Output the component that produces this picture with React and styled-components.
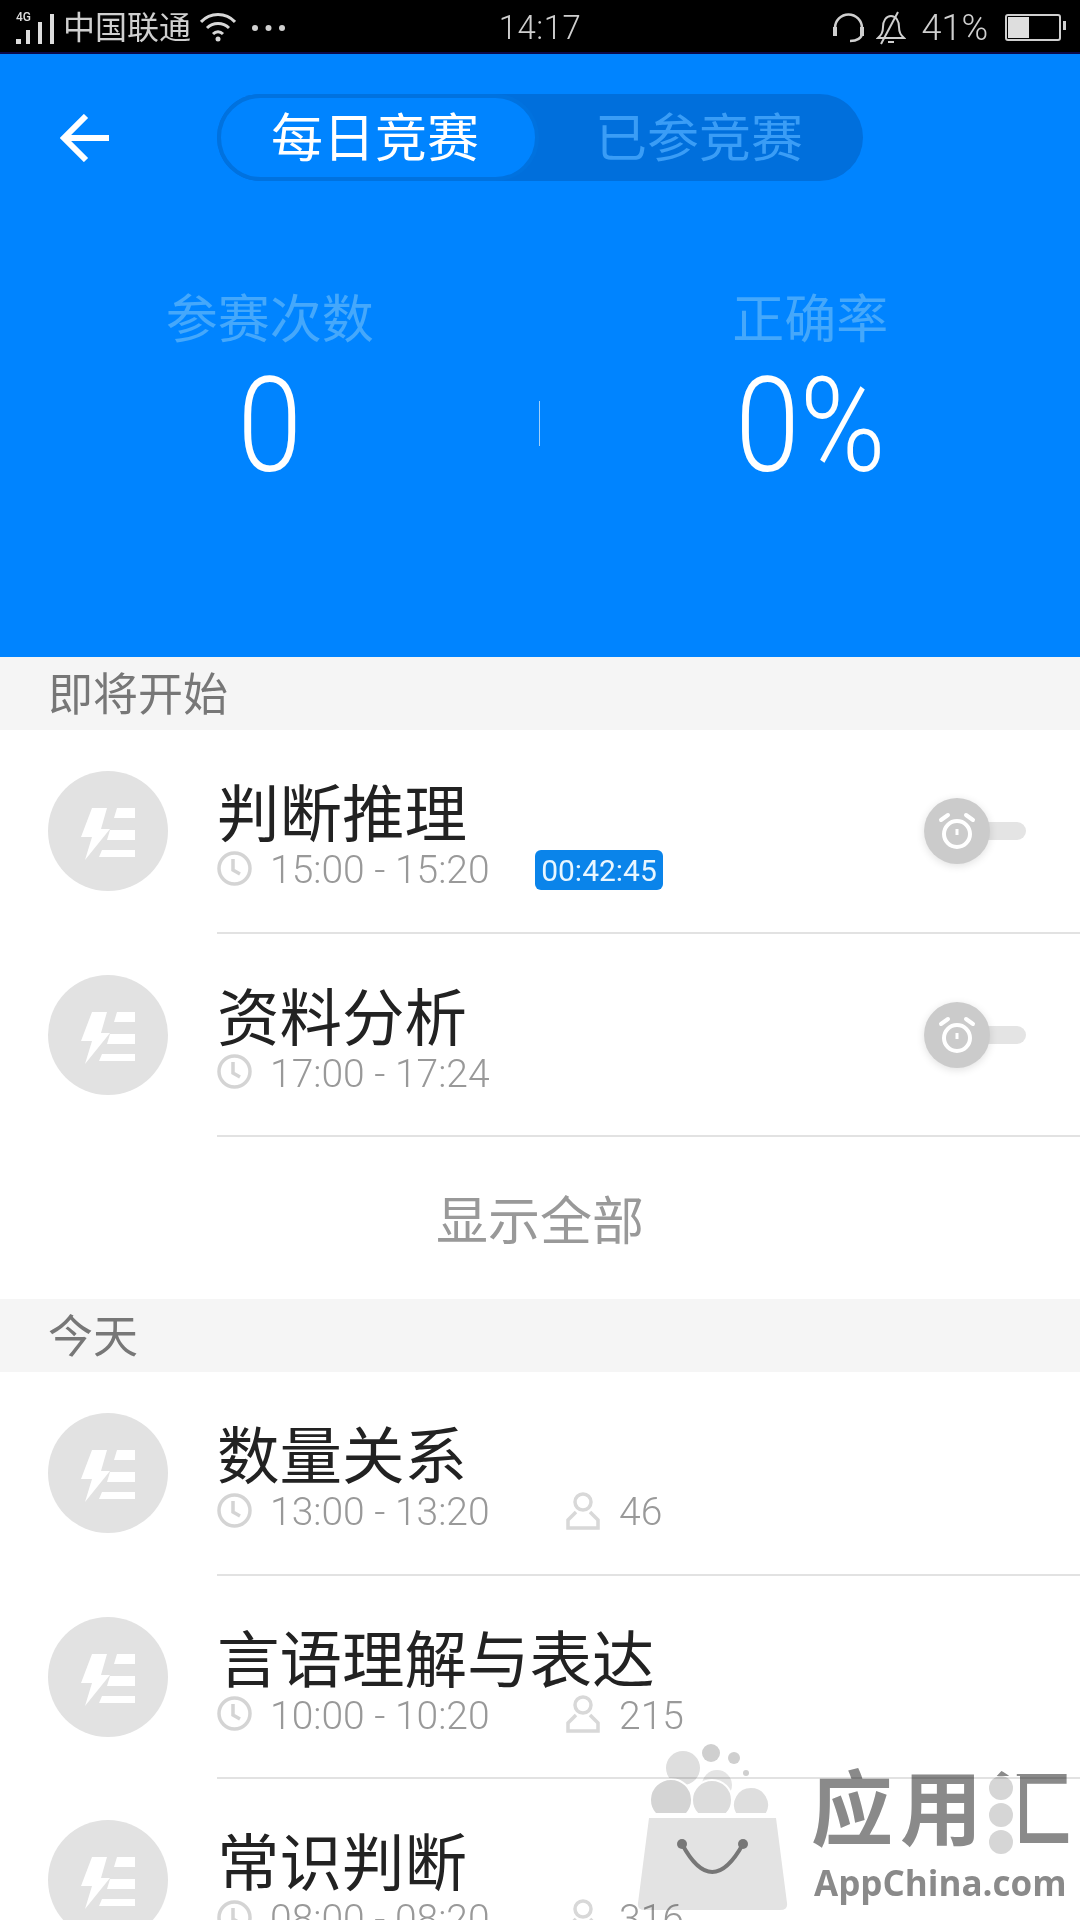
import React from "react";
import styled, { createGlobalStyle } from "styled-components";

const GlobalStyle = createGlobalStyle`
    html, body {
        margin: 0;
        padding: 0;
        background: #fff;
        font-family: Roboto, "Noto Sans CJK SC", sans-serif;
    }
`;

const Page = styled.div`
    position: relative;
    width: 1080px;
    height: 1920px;
    overflow: hidden;
    background: #fff;
`;

const StatusBar = styled.div`
    display: flex;
    align-items: center;
    height: 49px;
    padding: 3px 15px 0;
    background: #000;
    border-bottom: 2px solid #0b0a4a;
    color: #cfcfcf;
    font-size: 36px;
    font-weight: 300;
`;

const StatusSide = styled.div`
    flex: 1;
    display: flex;
    align-items: center;
    justify-content: ${(p) => (p.$end ? "flex-end" : "flex-start")};
`;

const SignalWrap = styled.div`
    position: relative;
    width: 40px;
    height: 32px;
    margin-right: 8px;
`;

const SignalTag = styled.span`
    position: absolute;
    top: -2px;
    left: 1px;
    font-size: 12px;
    line-height: 14px;
    font-weight: 500;
    color: #ddd;
`;

const Carrier = styled.span`
    width: 129px;
    font-size: 32px;
    line-height: 40px;
    font-weight: 400;
    margin-right: 8px;
`;

const Clock = styled.span`
    font-size: 33px;
    letter-spacing: 0.5px;
`;

const Battery = styled.div`
    position: relative;
    display: flex;
    width: 50px;
    height: 21px;
    padding: 1px;
    margin: 0 4px 0 17px;
    border: 2px solid #cfcfcf;
    border-radius: 3px;

    &::before {
        content: "";
        width: 41%;
        background: #dedede;
    }

    &::after {
        content: "";
        position: absolute;
        top: 5px;
        right: -7px;
        width: 3px;
        height: 9px;
        background: #cfcfcf;
    }
`;

const Hero = styled.section`
    display: flex;
    flex-direction: column;
    height: 603px;
    background: #0084ff;
`;

const TopRow = styled.div`
    display: flex;
    align-items: center;
    padding: 40px 0 0 60px;
`;

const BackIcon = styled.svg`
    width: 50px;
    height: 48px;
    margin-right: 107px;
`;

const Tabs = styled.div`
    display: flex;
    width: 646px;
    height: 87px;
    border-radius: 44px;
    background: #006fdc;
`;

const Tab = styled.div`
    width: ${(p) => (p.$active ? "322px" : "auto")};
    box-sizing: border-box;
    padding: ${(p) => (p.$active ? "0 6px 0 0" : "0 0 0 56px")};
    text-align: ${(p) => (p.$active ? "center" : "left")};
    border: ${(p) => (p.$active ? "4px solid #0072df" : "none")};
    border-radius: 44px;
    background: ${(p) => (p.$active ? "#0084ff" : "transparent")};
    color: ${(p) => (p.$active ? "#fff" : "#3a9df6")};
    font-size: 52px;
    font-weight: 400;
    line-height: ${(p) => (p.$active ? "84px" : "92px")};
`;

const Stats = styled.div`
    display: flex;
    align-items: center;
    margin-top: 110px;
`;

const Stat = styled.div`
    flex: 1;
    display: flex;
    flex-direction: column;
    align-items: center;
`;

const StatLabel = styled.div`
    color: #45a8fb;
    font-size: 52px;
    font-weight: 400;
    line-height: 60px;
`;

const StatValue = styled.div`
    margin-top: 10px;
    color: #fff;
    font-size: 132px;
    font-weight: 300;
    line-height: 130px;
    transform: scaleX(0.88);
`;

const StatDivider = styled.div`
    width: 1px;
    height: 45px;
    margin: 64px 1px 0 -1px;
    background: #9fd0fb;
`;

const SectionTitle = styled.div`
    height: 73px;
    padding-left: 48px;
    background: #f5f5f5;
    color: #777;
    font-size: 45px;
    font-weight: 400;
    line-height: 78px;
`;

const Row = styled.div`
    display: flex;
    height: 203.5px;
    padding-left: 48px;
`;

const Avatar = styled.svg`
    flex: none;
    width: 120px;
    height: 120px;
    margin: 41px 49px 0 0;
`;

const RowBody = styled.div`
    flex: 1;
    display: flex;
    align-items: flex-start;
    justify-content: space-between;
    box-sizing: border-box;
    padding: 53px 54px 0 0;
    border-bottom: 2px solid #e2e2e2;
`;

const RowTitle = styled.div`
    color: #222;
    font-size: 62.5px;
    font-weight: 400;
    line-height: 66px;
    white-space: nowrap;
`;

const Meta = styled.div`
    display: flex;
    align-items: center;
    height: 40px;
    margin-top: 1px;
    color: #999;
    font-size: 39px;
    font-weight: 300;
`;

const ClockIcon = styled.svg`
    width: 35px;
    height: 35px;
    margin-top: -4px;
`;

const TimeText = styled.span`
    width: 218px;
    margin-left: 18px;
    white-space: nowrap;
`;

const Countdown = styled.span`
    width: 128px;
    height: 40px;
    margin-left: 47px;
    border-radius: 6px;
    background: #0a84ea;
    color: #e8f6ff;
    font-size: 30px;
    font-weight: 400;
    line-height: 41px;
    text-align: center;
`;

const PersonIcon = styled.svg`
    width: 36px;
    height: 38px;
    margin: -3px 18px 0 77px;
`;

const Toggle = styled.div`
    position: relative;
    width: 102px;
    height: 66px;
    margin-top: 15px;

    &::before {
        content: "";
        position: absolute;
        top: 24px;
        left: 40px;
        width: 62px;
        height: 18px;
        border-radius: 9px;
        background: #e4e4e4;
    }
`;

const Knob = styled.svg`
    position: absolute;
    top: 0;
    left: 0;
    width: 66px;
    height: 66px;
    border-radius: 50%;
    background: #cbcbcb;
    box-shadow: 0 2px 8px rgba(0, 0, 0, 0.12);
`;

const ShowAll = styled.div`
    height: 162px;
    color: #999;
    font-size: 52px;
    font-weight: 400;
    line-height: 172px;
    text-align: center;
`;

const Watermark = styled.div`
    position: absolute;
    left: 630px;
    top: 1740px;
    display: flex;
    width: 450px;
    mix-blend-mode: multiply;
`;

const BagIcon = styled.svg`
    flex: none;
    width: 160px;
    height: 172px;
    margin-right: 21px;
`;

const Wordmark = styled.div`
    position: relative;
    padding-top: 23px;
`;

const WordmarkCn = styled.div`
    color: #8a8a8a;
    font-size: 82px;
    font-weight: 700;
    line-height: 96px;
    letter-spacing: 7px;
    white-space: nowrap;
`;

const WordmarkHui = styled.span`
    position: relative;
    display: inline-block;
`;

const HuiDots = styled.span`
    position: absolute;
    top: 13px;
    left: -7px;
    display: flex;
    flex-direction: column;
    gap: 3px;
    width: 38px;
    height: 92px;
    background: #fff;
`;

const HuiDot = styled.i`
    width: 24px;
    height: 24px;
    margin-left: 7px;
    border-radius: 50%;
    background: #d6d6d6;
`;

const WordmarkEn = styled.div`
    margin: 3px 0 0 3px;
    color: #8a8a8a;
    font-family: "Open Sans", sans-serif;
    font-size: 35px;
    font-weight: 700;
    line-height: 42px;
    white-space: nowrap;
`;

const ClockGlyph = () => (
    <ClockIcon viewBox="0 0 35 35" fill="none" stroke="#d4d4d4" strokeWidth="3.5">
        <circle cx="17.5" cy="17.5" r="15.5" />
        <path d="M16 8v11l7 4" />
    </ClockIcon>
);

const BrandGlyph = () => (
    <Avatar viewBox="0 0 120 120">
        <circle cx="60" cy="60" r="60" fill="#e2e2e2" />
        <path fill="#fff" d="M44 37h15l-6 21h9L37 89l7-23H33z" />
        <path fill="#fff" d="M69 37h18v10H66zM62 59h25v10H59zM54 79h33v7H51z" />
    </Avatar>
);

const AlarmToggle = () => (
    <Toggle>
        <Knob viewBox="0 0 66 66" fill="none" stroke="#fff">
            <circle cx="33" cy="36" r="13" strokeWidth="4" />
            <path d="M33 31v6" strokeWidth="3" />
            <path d="M17 22l7-5M49 22l-7-5" strokeWidth="4" strokeLinecap="round" />
        </Knob>
    </Toggle>
);

const upcoming = [
    { title: "判断推理", time: "15:00 - 15:20", countdown: "00:42:45", alarm: true },
    { title: "资料分析", time: "17:00 - 17:24", alarm: true },
];

const today = [
    { title: "数量关系", time: "13:00 - 13:20", count: 46 },
    { title: "言语理解与表达", time: "10:00 - 10:20", count: 215 },
    { title: "常识判断", time: "08:00 - 08:20", count: 316 },
];

const Contest = ({ title, time, countdown, count, alarm }) => (
    <Row>
        <BrandGlyph />
        <RowBody>
            <div>
                <RowTitle>{title}</RowTitle>
                <Meta>
                    <ClockGlyph />
                    <TimeText>{time}</TimeText>
                    {countdown && <Countdown>{countdown}</Countdown>}
                    {count !== undefined && (
                        <>
                            <PersonIcon viewBox="0 0 36 38" fill="none" stroke="#d8d8d8" strokeWidth="3.5">
                                <circle cx="18" cy="10" r="8" />
                                <path d="M11 20L3 28v8h30v-8l-8-8" />
                            </PersonIcon>
                            <span>{count}</span>
                        </>
                    )}
                </Meta>
            </div>
            {alarm && <AlarmToggle />}
        </RowBody>
    </Row>
);

export default function App() {
    return (
        <Page>
            <GlobalStyle />
            <StatusBar>
                <StatusSide>
                    <SignalWrap>
                        <SignalTag>4G</SignalTag>
                        <svg width="40" height="32" viewBox="0 0 40 32" fill="#ddd">
                            <rect x="1" y="26" width="5" height="5" />
                            <rect x="11" y="17" width="4" height="14" />
                            <rect x="23" y="9" width="4" height="22" />
                            <rect x="35" y="1" width="4" height="30" />
                        </svg>
                    </SignalWrap>
                    <Carrier>中国联通</Carrier>
                    <svg width="36" height="32" viewBox="0 0 36 32" fill="none" stroke="#d8d8d8" strokeWidth="3">
                        <path d="M1 10C10 0 26 0 35 10M7 16c6-6 16-6 22 0M13 22c3-3 7-3 10 0" />
                        <circle cx="18" cy="27" r="2.5" fill="#d8d8d8" stroke="none" />
                    </svg>
                    <svg width="33" height="32" viewBox="0 0 33 32" fill="#d0d0d0" style={{ marginLeft: 16 }}>
                        <circle cx="3" cy="16" r="3" />
                        <circle cx="16.5" cy="16" r="3" />
                        <circle cx="30" cy="16" r="3" />
                    </svg>
                </StatusSide>
                <Clock>14:17</Clock>
                <StatusSide $end>
                    <svg width="33" height="30" viewBox="0 0 33 30" fill="none" stroke="#cfcfcf" strokeWidth="2.5">
                        <path d="M3 20v-5a13.5 13.5 0 0 1 27 0v5c0 5-5 8-12 8" />
                        <path d="M3 14v9M30 14v9" strokeWidth="4" />
                    </svg>
                    <svg width="30" height="34" viewBox="0 0 30 34" fill="none" stroke="#cfcfcf" strokeWidth="2" style={{ margin: "0 15px 0 11px" }}>
                        <path d="M2 27c3-3 5-5 5-11s3-11 8-11 8 5 8 11 2 8 5 11z" />
                        <path d="M5 33L22 1" />
                        <path d="M12 31h6" />
                    </svg>
                    <span>41%</span>
                    <Battery />
                </StatusSide>
            </StatusBar>

            <Hero>
                <TopRow>
                    <BackIcon viewBox="0 0 50 48" fill="none" stroke="#fff" strokeWidth="6">
                        <path d="M49 24H4" />
                        <path d="M26 2L4 24l22 22" />
                    </BackIcon>
                    <Tabs>
                        <Tab $active>每日竞赛</Tab>
                        <Tab>已参竞赛</Tab>
                    </Tabs>
                </TopRow>
                <Stats>
                    <Stat>
                        <StatLabel>参赛次数</StatLabel>
                        <StatValue>0</StatValue>
                    </Stat>
                    <StatDivider />
                    <Stat>
                        <StatLabel>正确率</StatLabel>
                        <StatValue>0%</StatValue>
                    </Stat>
                </Stats>
            </Hero>

            <SectionTitle>即将开始</SectionTitle>
            {upcoming.map((item) => (
                <Contest key={item.title} {...item} />
            ))}
            <ShowAll>显示全部</ShowAll>

            <SectionTitle>今天</SectionTitle>
            {today.map((item) => (
                <Contest key={item.title} {...item} />
            ))}

            <Watermark>
                <BagIcon viewBox="0 0 160 172">
                    <circle cx="53" cy="28" r="17" fill="#dedede" />
                    <circle cx="81" cy="13" r="9" fill="#cfcfcf" />
                    <circle cx="104" cy="18" r="6" fill="#cfcfcf" />
                    <circle cx="116" cy="33" r="3" fill="#cfcfcf" />
                    <circle cx="87" cy="45" r="15" fill="#e4e4e4" />
                    <path fill="#d4d4d4" stroke="#fff" strokeWidth="2" d="M25.4 74A21 21 0 1 1 56.6 74Z" />
                    <path fill="#dcdcdc" stroke="#fff" strokeWidth="2" d="M67.7 74A20 20 0 1 1 96.3 74Z" />
                    <path fill="#dedede" stroke="#fff" strokeWidth="2" d="M105.4 74A18 18 0 1 1 136.6 74Z" />
                    <path fill="#e3e3e3" d="M19 78h127l11 85q1 7-7 7H15q-8 0-7-7z" />
                    <path fill="none" stroke="#777" strokeWidth="4" d="M52 104Q82 160 113 104" />
                    <circle cx="52" cy="104" r="5" fill="#777" />
                    <circle cx="113" cy="104" r="5" fill="#777" />
                </BagIcon>
                <Wordmark>
                    <WordmarkCn>
                        应用
                        <WordmarkHui>
                            汇
                            <HuiDots>
                                <HuiDot />
                                <HuiDot />
                                <HuiDot />
                            </HuiDots>
                        </WordmarkHui>
                    </WordmarkCn>
                    <WordmarkEn>AppChina.com</WordmarkEn>
                </Wordmark>
            </Watermark>
        </Page>
    );
}
